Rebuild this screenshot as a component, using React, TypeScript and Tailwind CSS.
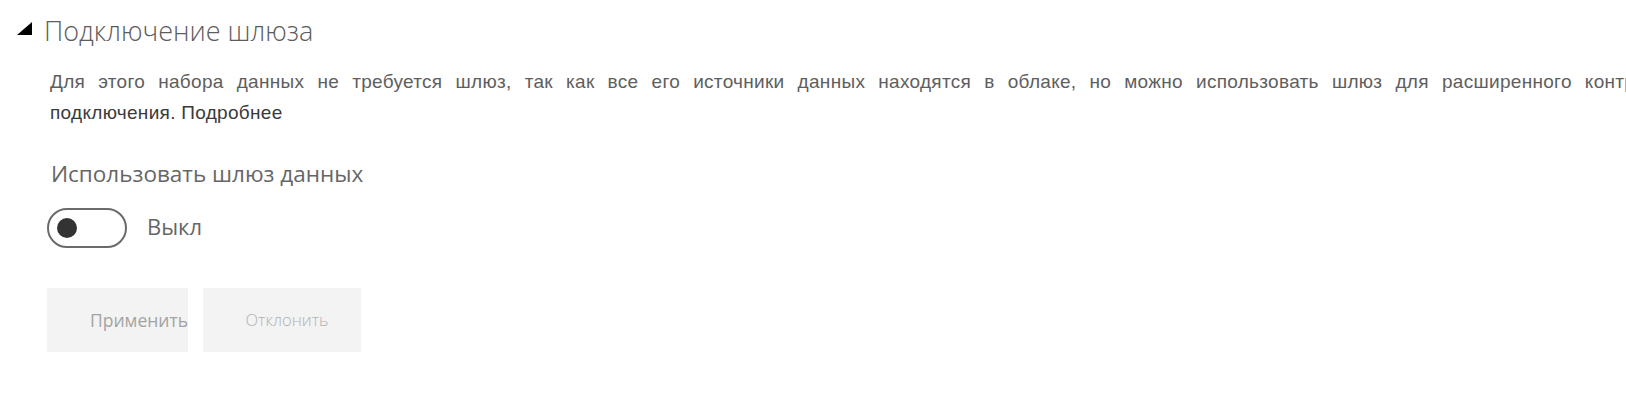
import React from "react";

const uiFont = { fontFamily: '"Open Sans", "Noto Sans", sans-serif' };
const arial = { fontFamily: '"Liberation Sans", Arial, sans-serif' };

function Toggle() {
  return (
    <div className="flex items-center w-[80px] h-[40px] rounded-full border-2 border-[#6b6b6b] pl-[8px]">
      <div className="w-[20px] h-[20px] rounded-full bg-[#333333]" />
    </div>
  );
}

export default function App() {
  return (
    <div className="w-[1626px] h-[408px] overflow-hidden bg-white">
      {/* Section header */}
      <div className="flex items-center h-[36px] mt-[13px] pl-[17px] gap-[12px]">
        <svg width="15" height="13" viewBox="0 0 15 13" className="shrink-0 mb-[6px]">
          <polygon points="15,0 15,13 0,13" fill="#000" />
        </svg>
        <h2
          className="text-[27px] font-light leading-[36px] text-[#5c5c5c] whitespace-nowrap"
          style={uiFont}
        >
          Подключение шлюза
        </h2>
      </div>

      {/* Description */}
      <div
        className="mt-[17px] pl-[50px] text-[19px] leading-[31px] tracking-[0.3px]"
        style={arial}
      >
        <p className="text-[#5e5e5e] whitespace-nowrap [word-spacing:7.5px]">
          Для этого набора данных не требуется шлюз, так как все его источники данных находятся в облаке, но можно использовать шлюз для расширенного контроля над способом
        </p>
        <p className="text-[#3a3a3a] whitespace-nowrap">
          подключения. <a className="text-[#3a3a3a]">Подробнее</a>
        </p>
      </div>

      {/* Gateway toggle */}
      <div className="mt-[30px] pl-[51px]" style={uiFont}>
        <p className="text-[22.5px] leading-[32px] text-[#666666]">Использовать шлюз данных</p>
      </div>
      <div className="mt-[18px] pl-[47px] flex items-center gap-[20px]" style={uiFont}>
        <Toggle />
        <span className="text-[22px] leading-[32px] text-[#666666] mb-[4px]">Выкл</span>
      </div>

      {/* Actions */}
      <div className="mt-[40px] pl-[47px] flex gap-[15px]" style={uiFont}>
        <button className="w-[141px] h-[64px] bg-[#f3f3f3] whitespace-nowrap text-left pl-[43px] text-[17.5px] text-[#a3a3a3]">
          Применить
        </button>
        <button className="w-[158px] h-[64px] bg-[#f3f3f3] pl-[10px] text-[16.5px] font-light text-[#b2b2b2]">
          Отклонить
        </button>
      </div>
    </div>
  );
}
